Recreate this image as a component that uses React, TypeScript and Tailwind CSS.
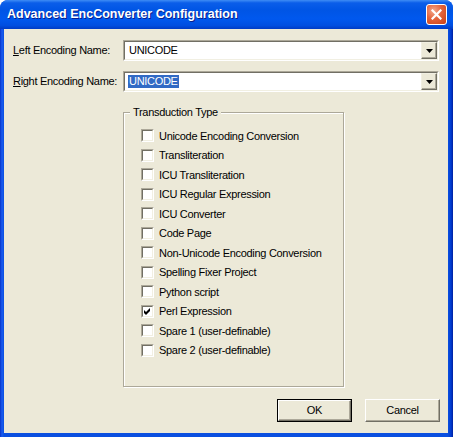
import React from 'react';

const font = { fontFamily: '"Liberation Sans", Arial, sans-serif' };

const items = [
  { label: 'Unicode Encoding Conversion', checked: false },
  { label: 'Transliteration', checked: false },
  { label: 'ICU Transliteration', checked: false },
  { label: 'ICU Regular Expression', checked: false },
  { label: 'ICU Converter', checked: false },
  { label: 'Code Page', checked: false },
  { label: 'Non-Unicode Encoding Conversion', checked: false },
  { label: 'Spelling Fixer Project', checked: false },
  { label: 'Python script', checked: false },
  { label: 'Perl Expression', checked: true },
  { label: 'Spare 1 (user-definable)', checked: false },
  { label: 'Spare 2 (user-definable)', checked: false },
];

const Combo = ({ selected }: { selected?: boolean }) => (
  <div className="w-[316px] h-[21px] flex border border-t-[#aca899] border-l-[#aca899] border-r-white border-b-white">
    <div className="flex-1 flex border border-t-[#716f64] border-l-[#716f64] border-r-[#f1efe2] border-b-[#f1efe2] bg-white">
      <div className="flex-1 flex items-center pl-[3px] text-[11px] text-black tracking-[-0.3px]">
        {selected ? (
          <span className="bg-[#316ac5] text-white px-[1px] leading-[13px]">UNICODE</span>
        ) : (
          <span className="px-[1px]">UNICODE</span>
        )}
      </div>
      <div className="w-[16px] h-full flex items-center justify-center bg-[#ece9d8] border border-t-[#f1efe2] border-l-[#f1efe2] border-r-[#716f64] border-b-[#716f64] shadow-[inset_-1px_-1px_0_#aca899]">
        <svg width="7" height="4" viewBox="0 0 7 4">
          <path d="M0 0 H7 L3.5 4 Z" fill="#000" />
        </svg>
      </div>
    </div>
  </div>
);

const Checkbox = ({ checked }: { checked: boolean }) => (
  <div className="w-[13px] h-[13px] border border-t-[#aca899] border-l-[#aca899] border-r-white border-b-white">
    <div className="w-full h-full bg-white border border-t-[#716f64] border-l-[#716f64] border-r-[#f1efe2] border-b-[#f1efe2] flex items-center justify-center">
      {checked && (
        <svg width="7" height="7" viewBox="0 0 7 7">
          <path d="M0 2 L2 4 L6 0 L6 3 L2 7 L0 5 Z" fill="#000" />
        </svg>
      )}
    </div>
  </div>
);

const Button = ({ label, primary }: { label: string; primary?: boolean }) => (
  <div className={`w-[75px] h-[23px] ${primary ? 'border border-black' : ''}`}>
    <div className="w-full h-full flex items-center justify-center bg-[#ece9d8] border border-t-white border-l-white border-r-[#716f64] border-b-[#716f64] shadow-[inset_-1px_-1px_0_#aca899] text-[11px] text-black">
      {label}
    </div>
  </div>
);

export default function App() {
  return (
    <div className="w-[453px] h-[437px] bg-white" style={font}>
      <div className="w-full h-full flex flex-col rounded-t-[8px] overflow-hidden bg-[#0a4fe0]">
        {/* Title bar */}
        <div className="h-[29px] flex items-center justify-between pl-[7px] pr-[6px] bg-[linear-gradient(to_bottom,#3f8df5_0%,#0b5ee9_10%,#0055e5_35%,#0058ee_65%,#004ee0_88%,#003bc4_100%)]">
          <span className="text-white font-bold text-[12.5px] [text-shadow:1px_1px_0_#0a1e8c]">
            Advanced EncConverter Configuration
          </span>
          <div className="w-[21px] h-[21px] rounded-[3px] border border-white bg-[radial-gradient(circle_at_35%_30%,#f3a88c_0%,#e4643c_45%,#c93f12_100%)] flex items-center justify-center">
            <svg width="11" height="11" viewBox="0 0 11 11">
              <path d="M1.5 1.5 L9.5 9.5 M9.5 1.5 L1.5 9.5" stroke="#fff" strokeWidth="2.2" strokeLinecap="square" />
            </svg>
          </div>
        </div>

        {/* Body */}
        <div className="flex-1 flex pl-[4px] pr-[5px] pb-[4px] bg-[linear-gradient(to_right,#0833c8_0px,#1a5cf0_2px,#0a4fe0_4px,#0a4fe0_calc(100%-5px),#003ad0_calc(100%-2px),#00209e_100%)]">
          <div className="flex-1 bg-[#ece9d8] pt-[11px] pl-[9px] text-[11px] text-black tracking-[-0.3px]">
            <div className="flex items-center">
              <div className="w-[110px]">
                <span className="underline">L</span>eft Encoding Name:
              </div>
              <Combo />
            </div>
            <div className="flex items-center mt-[10px]">
              <div className="w-[110px]">
                <span className="underline">R</span>ight Encoding Name:
              </div>
              <Combo selected />
            </div>

            {/* Group box */}
            <div className="relative ml-[110px] mt-[20px] w-[221px] h-[275px] border border-[#aca899] shadow-[inset_1px_1px_0_#fff,1px_1px_0_#fff]">
              <span className="absolute -top-[8px] left-[6px] px-[3px] bg-[#ece9d8] leading-[14px]">
                Transduction Type
              </span>
              <div className="pt-[13px] pl-[17px] flex flex-col">
                {items.map((item) => (
                  <div key={item.label} className="h-[19.5px] flex items-center">
                    <Checkbox checked={item.checked} />
                    <span className="ml-[5px]">{item.label}</span>
                  </div>
                ))}
              </div>
            </div>

            {/* Buttons */}
            <div className="flex justify-end gap-[13px] mt-[12px] pr-[8px]">
              <Button label="OK" primary />
              <Button label="Cancel" />
            </div>
          </div>
        </div>
      </div>
    </div>
  );
}
